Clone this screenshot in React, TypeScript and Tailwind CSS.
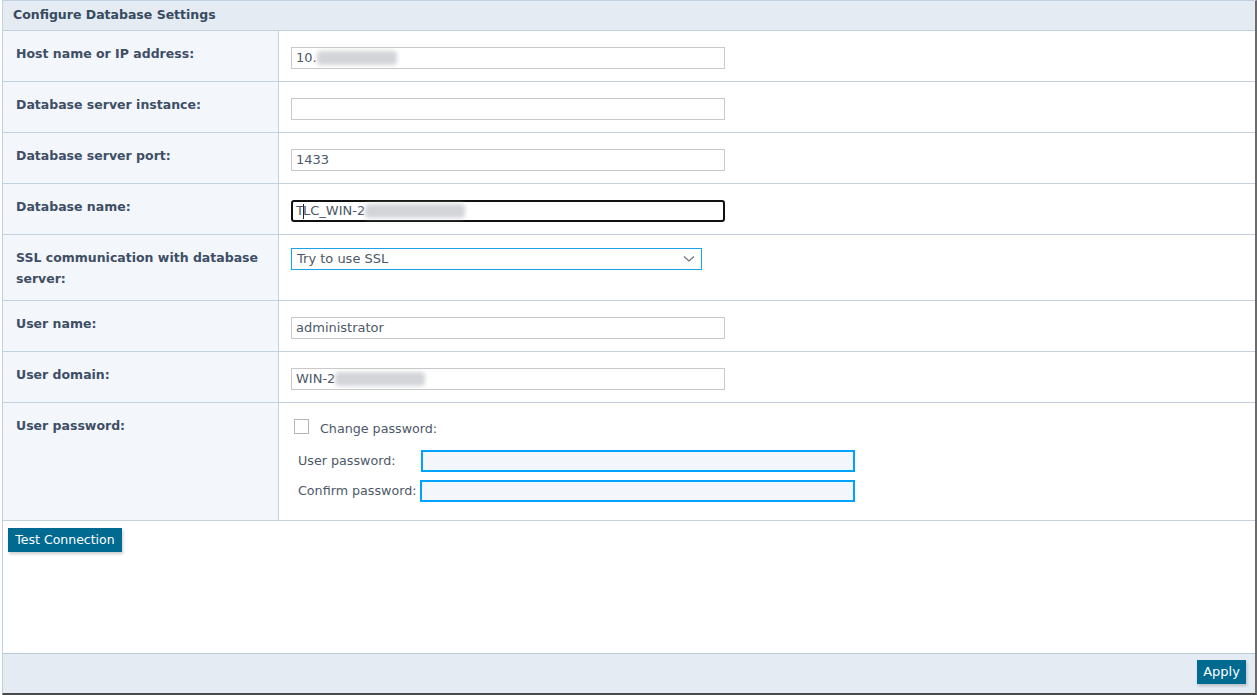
import React from "react";

const font = { fontFamily: '"DejaVu Sans", Verdana, sans-serif' };

function Blur({ w }: { w: number }) {
  return (
    <span
      className="inline-block h-[14px] align-middle rounded-sm bg-[#d2d4d8] blur-[2px]"
      style={{ width: w }}
    />
  );
}

function Row({
  label,
  children,
}: {
  label: React.ReactNode;
  children: React.ReactNode;
}) {
  return (
    <div className="flex border-b border-[#c3d1df]">
      <div className="w-[276px] shrink-0 border-r border-[#c3d1df] bg-[#f3f6fa] pl-[13px] pr-1 pt-3 pb-[11px] text-[12.5px] font-bold leading-[21px] text-[#3e4e66]">
        {label}
      </div>
      <div className="flex-1 pl-3">{children}</div>
    </div>
  );
}

function TextInput({ value, focused }: { value?: React.ReactNode; focused?: boolean }) {
  return (
    <div
      className={
        focused
          ? "mt-4 mb-3 flex h-[22px] w-[434px] items-center rounded-[3px] border-2 border-[#111] pl-[3px] text-[13px] text-[#4d5868]"
          : "mt-4 mb-3 flex h-[22px] w-[434px] items-center border border-[#c8c8c8] pl-[4px] text-[13px] text-[#4d5868]"
      }
    >
      {value}
    </div>
  );
}

export default function App() {
  return (
    <div className="h-[695px] w-[1257px] overflow-hidden bg-white" style={font}>
      <div className="ml-[2px] flex h-[695px] flex-col border-l border-t border-[#c3d1df] border-r-2 border-b-2 border-r-[#6b6b6b] border-b-[#4a4a4a]">
        <div className="flex h-[30px] shrink-0 items-center border-b border-[#c3d1df] bg-[#e4ebf3] pl-[10px] text-[12.5px] font-bold text-[#384a60]">
          Configure Database Settings
        </div>

        <Row label="Host name or IP address:">
          <TextInput
            value={
              <>
                10.<Blur w={80} />
              </>
            }
          />
        </Row>
        <Row label="Database server instance:">
          <TextInput />
        </Row>
        <Row label="Database server port:">
          <TextInput value="1433" />
        </Row>
        <Row label="Database name:">
          <TextInput
            focused
            value={
              <>
                T<span className="mx-[-1px] inline-block h-[15px] w-px bg-[#222]" />LC_WIN-2<Blur w={100} />
              </>
            }
          />
        </Row>
        <Row
          label={
            <>
              SSL communication with database
              <br />
              server:
            </>
          }
        >
          <div className="mt-[13px] flex h-[22px] w-[411px] items-center justify-between border border-[#1aa3e8] pl-[5px] pr-[6px] text-[13px] text-[#4d5868]">
            <span>Try to use SSL</span>
            <svg width="12" height="8" viewBox="0 0 12 8" fill="none">
              <path d="M1 1.5 L6 6 L11 1.5" stroke="#6b7280" strokeWidth="1.2" />
            </svg>
          </div>
        </Row>
        <Row label="User name:">
          <TextInput value="administrator" />
        </Row>
        <Row label="User domain:">
          <TextInput
            value={
              <>
                WIN-2<Blur w={90} />
              </>
            }
          />
        </Row>
        <Row label="User password:">
          <div className="pb-[18px] pt-4 text-[12.7px] text-[#4d5868]">
            <div className="flex items-start pl-[3px]">
              <span className="h-[15px] w-[15px] shrink-0 border border-[#b5b5b5] bg-white" />
              <span className="ml-[11px] mt-[2px] leading-4">Change password:</span>
            </div>
            <div className="mt-[13px] flex items-center pl-[7px]">
              <span className="w-[123px]">User password:</span>
              <div className="h-[22px] w-[434px] border-2 border-[#00a2ff] bg-[#f3f6fa]" />
            </div>
            <div className="mt-2 flex items-center pl-[7px]">
              <span className="w-[122px]">Confirm password:</span>
              <div className="h-[22px] w-[435px] border-2 border-[#00a2ff] bg-[#f3f6fa]" />
            </div>
          </div>
        </Row>

        <div className="flex-1 pl-[5px] pt-[6px]">
          <button className="h-[24px] w-[114px] bg-[#006a91] text-[12.5px] text-white shadow-[1px_2px_3px_rgba(0,0,0,0.2)]">
            Test Connection
          </button>
        </div>

        <div className="flex h-[40px] shrink-0 justify-end border-t border-[#b9c9d9] bg-[#e4ebf3] pr-[9px] pt-[6px]">
          <button className="h-[24px] w-[49px] bg-[#006a91] text-[13px] text-white shadow-[1px_2px_3px_rgba(0,0,0,0.2)]">
            Apply
          </button>
        </div>
      </div>
    </div>
  );
}
